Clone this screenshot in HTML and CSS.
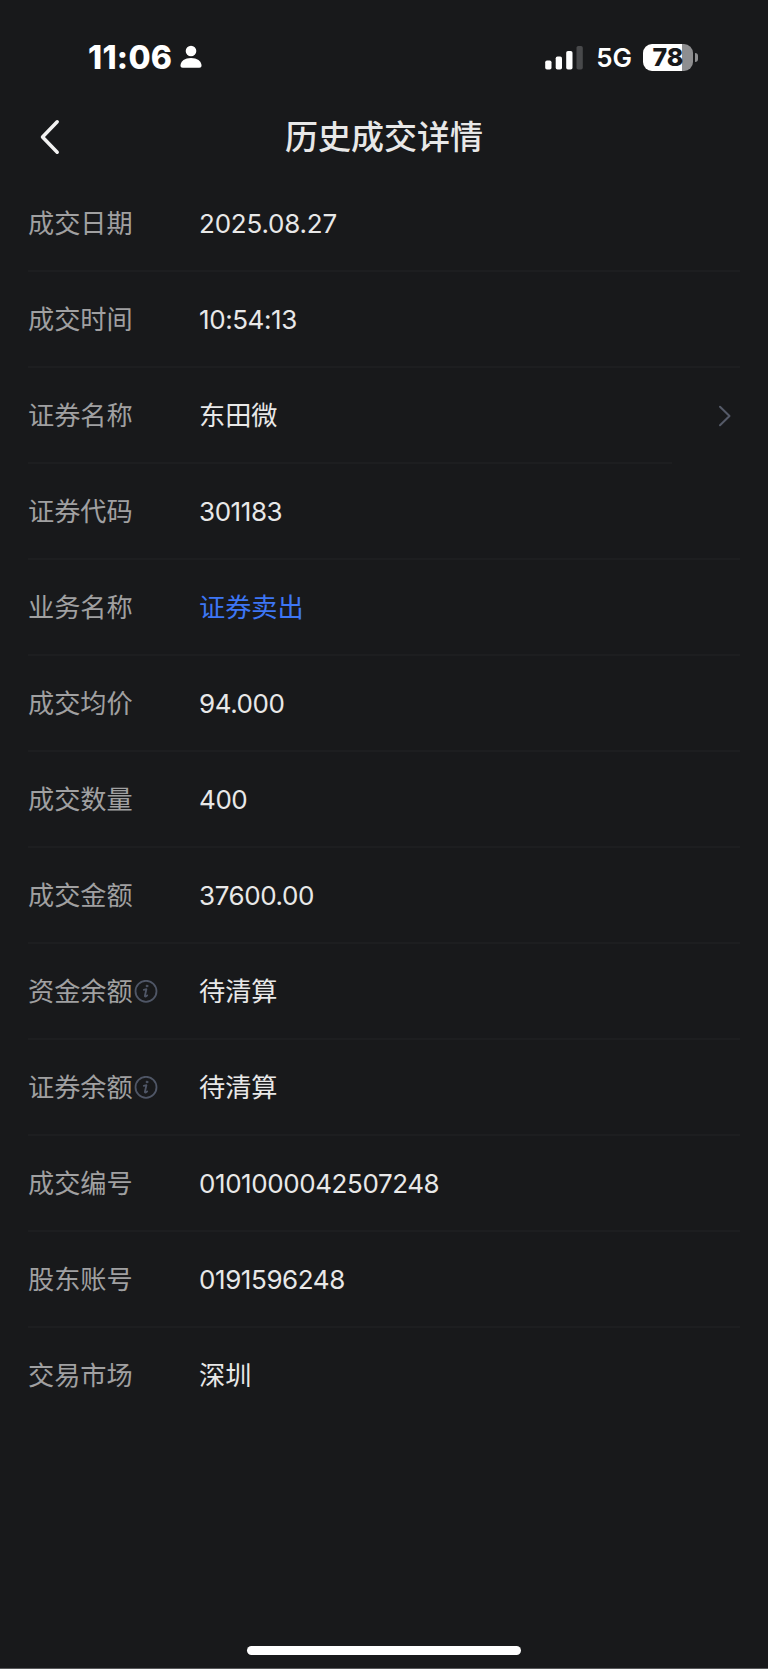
FILE: index.html
```
<!DOCTYPE html>
<html lang="zh-CN">
<head>
  <meta charset="UTF-8">
  <meta name="viewport" content="width=device-width, initial-scale=1.0">
  <title>历史成交详情</title>
  <link rel="stylesheet" href="styles.css">
</head>
<body>
  <div class="page">
    <div class="status-bar">
      <div class="status-left">
        <span class="time">11:06</span>
        <svg class="person" width="22" height="24" viewBox="0 0 22 24" fill="#fff">
          <circle cx="11" cy="6" r="5.3"/>
          <path d="M0.5 20.5C0.5 16 5 13 11 13s10.500 3 10.500 7.500c0 1.600-.8 2.200-2.200 2.200H2.700C1.300 22.700.5 22.100.5 20.500z"/>
        </svg>
      </div>
      <div class="status-right">
        <svg class="signal" width="39" height="26" viewBox="0 0 39 26" fill="#fff">
          <rect x="0.2" y="15.500" width="6.300" height="9" rx="1.800"/>
          <rect x="10.700" y="11.500" width="6.300" height="13" rx="1.800"/>
          <rect x="21.200" y="6" width="6.300" height="18.500" rx="1.800"/>
          <rect x="31.500" y="1" width="6.300" height="23.500" rx="1.800" fill="#48494b"/>
        </svg>
        <span class="network">5G</span>
        <div class="battery"><span>78</span></div>
        <div class="battery-tip"></div>
      </div>
    </div>

    <header class="header">
      <svg class="back" width="24" height="36" viewBox="0 0 24 36" fill="none" stroke="#f2f2f2" stroke-width="3.500" stroke-linecap="round" stroke-linejoin="round">
        <path d="M20.200 2.800L5.500 18 20.200 33.200"/>
      </svg>
      <h1 class="title">历史成交详情</h1>
    </header>

    <main class="list">
      <div class="row"><span class="label">成交日期</span><span class="value date">2025.08.27</span></div>
      <div class="row"><span class="label">成交时间</span><span class="value num">10:54:13</span></div>
      <div class="row row-link">
        <span class="label">证券名称</span><span class="value">东田微</span>
        <svg class="arrow" width="14" height="22" viewBox="0 0 14 22" fill="none" stroke="#555a68" stroke-width="2" stroke-linecap="round" stroke-linejoin="round">
          <path d="M2 1.700L11.500 11 2 20.300"/>
        </svg>
      </div>
      <div class="row"><span class="label">证券代码</span><span class="value num">301183</span></div>
      <div class="row"><span class="label">业务名称</span><span class="value sell">证券卖出</span></div>
      <div class="row"><span class="label">成交均价</span><span class="value num">94.000</span></div>
      <div class="row"><span class="label">成交数量</span><span class="value num">400</span></div>
      <div class="row"><span class="label">成交金额</span><span class="value num">37600.00</span></div>
      <div class="row">
        <span class="label">资金余额<svg class="info" width="24" height="24" viewBox="0 0 24 24" fill="none" stroke="#4f5666" stroke-width="1.800" stroke-linecap="round" stroke-linejoin="round">
          <circle cx="12" cy="11.300" r="10.500"/>
          <path d="M9.800 9.800l2.600-.6-1.500 6.600c-.2 1.100 1 .9 2.300-.4"/>
          <circle cx="13" cy="6" r=".9" fill="#4f5666" stroke-width="1"/>
        </svg></span><span class="value">待清算</span>
      </div>
      <div class="row">
        <span class="label">证券余额<svg class="info" width="24" height="24" viewBox="0 0 24 24" fill="none" stroke="#4f5666" stroke-width="1.800" stroke-linecap="round" stroke-linejoin="round">
          <circle cx="12" cy="11.300" r="10.500"/>
          <path d="M9.800 9.800l2.600-.6-1.500 6.600c-.2 1.100 1 .9 2.300-.4"/>
          <circle cx="13" cy="6" r=".9" fill="#4f5666" stroke-width="1"/>
        </svg></span><span class="value">待清算</span>
      </div>
      <div class="row"><span class="label">成交编号</span><span class="value num">0101000042507248</span></div>
      <div class="row"><span class="label">股东账号</span><span class="value num">0191596248</span></div>
      <div class="row"><span class="label">交易市场</span><span class="value">深圳</span></div>
    </main>

    <div class="home-indicator"></div>
  </div>
</body>
</html>
```
FILE: styles.css
```
* {
  margin: 0;
  padding: 0;
  box-sizing: border-box;
}

body {
  background: #18191b;
  font-family: Inter, "Noto Sans CJK SC", sans-serif;
  color: #e8e8e8;
}

.page {
  display: flex;
  flex-direction: column;
  height: 1669px;
  border-bottom: 1px solid #57585a;
}

.status-bar {
  display: flex;
  justify-content: space-between;
  align-items: center;
  height: 100px;
  padding: 14px 70px 0 88px;
  color: #fff;
}

.status-left,
.status-right {
  display: flex;
  align-items: center;
}

.time {
  width: 84px;
  padding-top: 1px;
  font-size: 32px;
  font-weight: 800;
  line-height: 36px;
  letter-spacing: 0.3px;
}

.person {
  margin-left: 8px;
}

.signal {
  margin-top: 1px;
}

.network {
  margin-left: 12px;
  padding-top: 2px;
  font-size: 26px;
  font-weight: 600;
  line-height: 30px;
}

.battery {
  display: flex;
  justify-content: center;
  width: 50px;
  height: 27px;
  margin-left: 11px;
  border-radius: 9px;
  background: linear-gradient(to right, #fff 78%, #8e8e90 78%);
  color: #18191b;
  font-size: 25px;
  font-weight: 800;
  line-height: 27px;
}

.battery-tip {
  width: 3px;
  height: 9px;
  margin-left: 2px;
  border-radius: 0 3px 3px 0;
  background: #8e8e90;
}

.header {
  display: grid;
  grid-template-columns: 60px 1fr 60px;
  align-items: center;
  height: 76px;
  padding: 0 37px 3px;
}

.title {
  text-align: center;
  font-size: 33px;
  font-weight: 500;
  line-height: 48px;
}

.list {
  flex: 1;
  padding-left: 28px;
}

.row {
  display: flex;
  align-items: center;
  width: 712px;
  height: 96px;
  padding-top: 2px;
  border-bottom: 2px solid #1d1e20;
  font-size: 26.2px;
  line-height: 38px;
}

.row:last-child {
  border-bottom-color: transparent;
}

.row-link {
  width: 644px;
}

.label {
  display: flex;
  align-items: center;
  flex: 0 0 171px;
  color: #a0a0a1;
}

.info {
  margin-left: 1px;
}

.value {
  flex: none;
}

.num,
.date {
  font-size: 26px;
  letter-spacing: -0.42px;
}

.date {
  letter-spacing: -0.2px;
}

.sell {
  color: #3d76f5;
}

/* the arrow sits past the short divider */
.arrow {
  flex: none;
  margin-left: auto;
  margin-right: -60px;
}

.home-indicator {
  width: 274px;
  height: 9px;
  margin: 0 auto 13px;
  border-radius: 5px;
  background: #fff;
}
```
